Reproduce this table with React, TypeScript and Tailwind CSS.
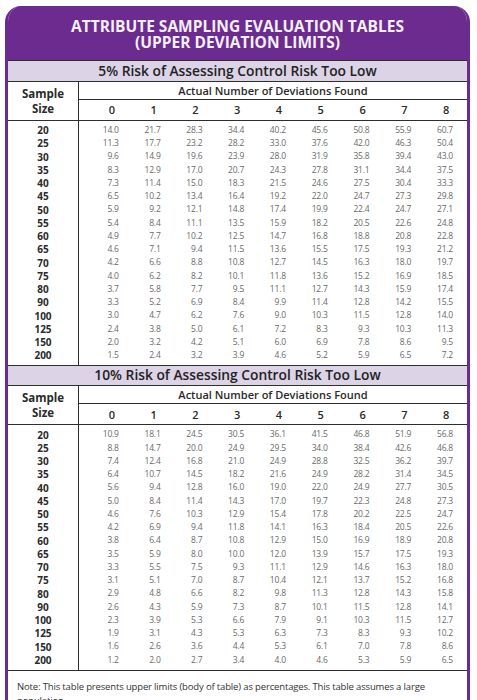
import React from 'react';

const sizes = [20, 25, 30, 35, 40, 45, 50, 55, 60, 65, 70, 75, 80, 90, 100, 125, 150, 200];

const fivePct: string[][] = [
  ['14.0', '21.7', '28.3', '34.4', '40.2', '45.6', '50.8', '55.9', '60.7'],
  ['11.3', '17.7', '23.2', '28.2', '33.0', '37.6', '42.0', '46.3', '50.4'],
  ['9.6', '14.9', '19.6', '23.9', '28.0', '31.9', '35.8', '39.4', '43.0'],
  ['8.3', '12.9', '17.0', '20.7', '24.3', '27.8', '31.1', '34.4', '37.5'],
  ['7.3', '11.4', '15.0', '18.3', '21.5', '24.6', '27.5', '30.4', '33.3'],
  ['6.5', '10.2', '13.4', '16.4', '19.2', '22.0', '24.7', '27.3', '29.8'],
  ['5.9', '9.2', '12.1', '14.8', '17.4', '19.9', '22.4', '24.7', '27.1'],
  ['5.4', '8.4', '11.1', '13.5', '15.9', '18.2', '20.5', '22.6', '24.8'],
  ['4.9', '7.7', '10.2', '12.5', '14.7', '16.8', '18.8', '20.8', '22.8'],
  ['4.6', '7.1', '9.4', '11.5', '13.6', '15.5', '17.5', '19.3', '21.2'],
  ['4.2', '6.6', '8.8', '10.8', '12.7', '14.5', '16.3', '18.0', '19.7'],
  ['4.0', '6.2', '8.2', '10.1', '11.8', '13.6', '15.2', '16.9', '18.5'],
  ['3.7', '5.8', '7.7', '9.5', '11.1', '12.7', '14.3', '15.9', '17.4'],
  ['3.3', '5.2', '6.9', '8.4', '9.9', '11.4', '12.8', '14.2', '15.5'],
  ['3.0', '4.7', '6.2', '7.6', '9.0', '10.3', '11.5', '12.8', '14.0'],
  ['2.4', '3.8', '5.0', '6.1', '7.2', '8.3', '9.3', '10.3', '11.3'],
  ['2.0', '3.2', '4.2', '5.1', '6.0', '6.9', '7.8', '8.6', '9.5'],
  ['1.5', '2.4', '3.2', '3.9', '4.6', '5.2', '5.9', '6.5', '7.2'],
];

const tenPct: string[][] = [
  ['10.9', '18.1', '24.5', '30.5', '36.1', '41.5', '46.8', '51.9', '56.8'],
  ['8.8', '14.7', '20.0', '24.9', '29.5', '34.0', '38.4', '42.6', '46.8'],
  ['7.4', '12.4', '16.8', '21.0', '24.9', '28.8', '32.5', '36.2', '39.7'],
  ['6.4', '10.7', '14.5', '18.2', '21.6', '24.9', '28.2', '31.4', '34.5'],
  ['5.6', '9.4', '12.8', '16.0', '19.0', '22.0', '24.9', '27.7', '30.5'],
  ['5.0', '8.4', '11.4', '14.3', '17.0', '19.7', '22.3', '24.8', '27.3'],
  ['4.6', '7.6', '10.3', '12.9', '15.4', '17.8', '20.2', '22.5', '24.7'],
  ['4.2', '6.9', '9.4', '11.8', '14.1', '16.3', '18.4', '20.5', '22.6'],
  ['3.8', '6.4', '8.7', '10.8', '12.9', '15.0', '16.9', '18.9', '20.8'],
  ['3.5', '5.9', '8.0', '10.0', '12.0', '13.9', '15.7', '17.5', '19.3'],
  ['3.3', '5.5', '7.5', '9.3', '11.1', '12.9', '14.6', '16.3', '18.0'],
  ['3.1', '5.1', '7.0', '8.7', '10.4', '12.1', '13.7', '15.2', '16.8'],
  ['2.9', '4.8', '6.6', '8.2', '9.8', '11.3', '12.8', '14.3', '15.8'],
  ['2.6', '4.3', '5.9', '7.3', '8.7', '10.1', '11.5', '12.8', '14.1'],
  ['2.3', '3.9', '5.3', '6.6', '7.9', '9.1', '10.3', '11.5', '12.7'],
  ['1.9', '3.1', '4.3', '5.3', '6.3', '7.3', '8.3', '9.3', '10.2'],
  ['1.6', '2.6', '3.6', '4.4', '5.3', '6.1', '7.0', '7.8', '8.6'],
  ['1.2', '2.0', '2.7', '3.4', '4.0', '4.6', '5.3', '5.9', '6.5'],
];

const Section: React.FC<{ title: string; rows: string[][] }> = ({ title, rows }) => (
  <div>
    {/* Risk band */}
    <div className="h-[21.5px] border-y-[1.5px] border-[#2e2e2e] bg-[#ddd3e7] flex items-center justify-center text-[13.8px] font-semibold text-[#222] leading-none">
      {title}
    </div>

    {/* Column heads */}
    <div className="flex border-b-[1.5px] border-[#2e2e2e]">
      <div className="w-[71px] shrink-0 border-r-[1.5px] border-[#2e2e2e] flex flex-col items-center justify-center text-[11.5px] font-bold text-[#2a2a2a] leading-[15px]">
        <span>Sample</span>
        <span>Size</span>
      </div>
      <div className="flex-1">
        <div className="h-[18px] border-b-[1.5px] border-[#2e2e2e] flex items-center justify-center text-[11px] font-semibold text-[#2a2a2a] leading-none">
          Actual Number of Deviations Found
        </div>
        <div className="h-[20px] pl-[12px] grid grid-cols-9 items-center text-[11px] font-semibold text-[#2a2a2a] leading-none">
          {[0, 1, 2, 3, 4, 5, 6, 7, 8].map((n) => (
            <div key={n} className="text-center">
              {n}
            </div>
          ))}
        </div>
      </div>
    </div>

    {/* Body */}
    <div className="flex border-b-[1.5px] border-[#2e2e2e]">
      <div className="w-[71px] shrink-0 border-r-[1.5px] border-[#2e2e2e] py-[3px]">
        {sizes.map((s) => (
          <div key={s} className="h-[13.25px] flex items-center justify-center text-[10px] font-bold text-[#2a2a2a] leading-none">
            {s}
          </div>
        ))}
      </div>
      <div className="flex-1 py-[3px] pl-[12px]">
        {rows.map((r, i) => (
          <div key={i} className="h-[13.25px] grid grid-cols-9 items-center text-[8.5px] text-[#6a6a6a] leading-none tracking-[-0.2px]">
            {r.map((v, j) => (
              <div key={j} className="text-right pr-[14px]">
                {v}
              </div>
            ))}
          </div>
        ))}
      </div>
    </div>
  </div>
);

export default function App() {
  return (
    <div className="min-h-screen bg-white pt-[6px] pl-[5px]" style={{ fontFamily: '"Open Sans", "Noto Sans", sans-serif' }}>
      <div className="w-[465px] rounded-t-[16px] overflow-hidden border-x-[3px] border-[#6c2b8e] bg-white">
        {/* Header */}
        <div className="h-[54px] bg-[#6c2b8e] flex flex-col items-center justify-center pt-[3px] text-[#f4f0f6] font-bold text-[15.5px] leading-[15.5px]">
          <div>ATTRIBUTE SAMPLING EVALUATION TABLES</div>
          <div>(UPPER DEVIATION LIMITS)</div>
        </div>

        <Section title="5% Risk of Assessing Control Risk Too Low" rows={fivePct} />
        <div className="-mt-[1.5px]">
          <Section title="10% Risk of Assessing Control Risk Too Low" rows={tenPct} />
        </div>

        {/* Note */}
        <div className="pt-[9px] pl-[9px] pb-[20px] text-[9.5px] leading-[14px] text-[#333] tracking-[-0.15px]">
          Note: This table presents upper limits (body of table) as percentages. This table assumes a large
          <br />
          population.
        </div>
      </div>
    </div>
  );
}
